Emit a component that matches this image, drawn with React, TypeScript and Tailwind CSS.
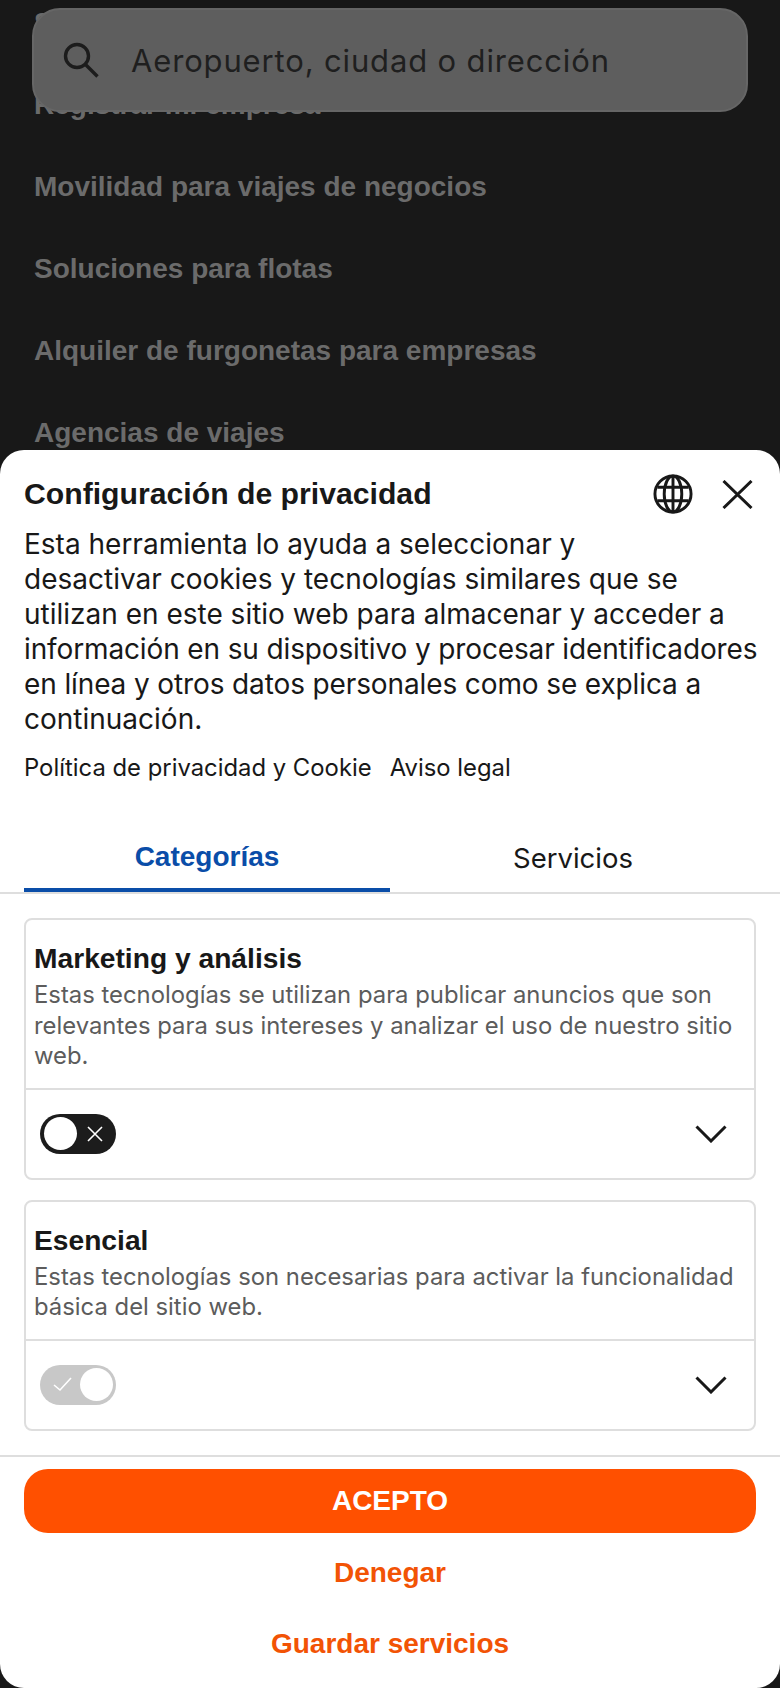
const sans = "font-['Liberation_Sans',Arial,sans-serif]";

const menuItems = [
  "Servicios",
  "Registrar mi empresa",
  "Movilidad para viajes de negocios",
  "Soluciones para flotas",
  "Alquiler de furgonetas para empresas",
  "Agencias de viajes",
];

function Chevron() {
  return (
    <svg width="32" height="18" viewBox="0 0 32 18" fill="none" stroke="#181818" strokeWidth="3">
      <path d="M1.5 1.5 16 16 30.5 1.5" />
    </svg>
  );
}

function ToggleOff() {
  return (
    <div className="flex h-[40px] w-[76px] items-center justify-between rounded-full bg-[#1c1c1c] pl-[4px] pr-[13px]">
      <div className="h-[33px] w-[33px] rounded-full bg-white" />
      <svg width="16" height="16" viewBox="0 0 16 16" fill="none" stroke="#fff" strokeWidth="1.6">
        <path d="M1 1l14 14M15 1 1 15" />
      </svg>
    </div>
  );
}

function ToggleOn() {
  return (
    <div className="flex h-[40px] w-[76px] items-center justify-between rounded-full bg-[#c8c8c8] pl-[13px] pr-[3px]">
      <svg width="19" height="15" viewBox="0 0 19 15" fill="none" stroke="#fff" strokeWidth="1.6">
        <path d="M1 8l6 5L18 1" />
      </svg>
      <div className="h-[33px] w-[33px] rounded-full bg-white" />
    </div>
  );
}

function Card(props: { title: string; text: string; toggle: React.ReactNode }) {
  return (
    <div className="rounded-[8px] border-2 border-[#dedede]">
      <div className="px-2 pt-[20px] pb-[16px]">
        <h3 className="text-[28.2px] leading-[36px] font-bold text-[#181818]">{props.title}</h3>
        <p className="mt-[4px] font-['Inter',sans-serif] text-[23.85px] leading-[30.5px] text-[#5c5c5c]">{props.text}</p>
      </div>
      <div className="flex h-[90px] items-center justify-between border-t-2 border-[#dedede] pr-[27px] pl-[14px]">
        {props.toggle}
        <Chevron />
      </div>
    </div>
  );
}

export default function App() {
  return (
    <div className={`relative h-[1688px] w-[780px] overflow-hidden bg-[#181818] ${sans}`}>
      <ul className="flex flex-col gap-[42px] pt-[3px] pl-[34px]">
        {menuItems.map((item) => (
          <li key={item} className="text-[28px] leading-[40px] font-bold text-[#6b6b6b]">
            {item}
          </li>
        ))}
      </ul>

      <div className="absolute top-2 left-8 flex h-[104px] w-[716px] items-center rounded-[28px] border-2 border-[#666] bg-[#5e5e5e] pl-[28px]">
        <svg width="38" height="38" viewBox="0 0 38 38" fill="none" stroke="#1c1c1c" strokeWidth="3.4">
          <circle cx="15" cy="15" r="11.5" />
          <path d="M23.5 23.5 35.5 35.5" />
        </svg>
        <span className="ml-[31px] pt-[3px] font-['Inter',sans-serif] text-[31px] tracking-[0.85px] text-[#1f1f1f]">
          Aeropuerto, ciudad o dirección
        </span>
      </div>

      <div className="absolute inset-x-0 bottom-0 flex h-[1238px] flex-col rounded-[24px] bg-white text-[#181818]">
        <div className="px-6 pt-[24px]">
          <div className="flex h-[40px] items-center justify-between">
            <h2 className="text-[30.2px] font-bold">Configuración de privacidad</h2>
            <div className="flex items-center gap-[29px] pr-[3px]">
              <svg width="40" height="40" viewBox="0 0 41 41" fill="none" stroke="#181818" strokeWidth="3">
                <circle cx="20.5" cy="20.5" r="18.5" />
                <ellipse cx="20.5" cy="20.5" rx="9" ry="18.5" />
                <path d="M20.5 2v37M4.5 13.5h32M4.5 27.5h32" />
              </svg>
              <svg width="31" height="29" viewBox="0 0 31 29" fill="none" stroke="#181818" strokeWidth="3">
                <path d="M1.5 1 29.5 28M29.5 1 1.5 28" />
              </svg>
            </div>
          </div>
          <p className="mt-[13px] whitespace-nowrap font-['Inter',sans-serif] text-[28px] leading-[35px]">
            Esta herramienta lo ayuda a seleccionar y
            <br />
            desactivar cookies y tecnologías similares que se
            <br />
            utilizan en este sitio web para almacenar y acceder a
            <br />
            <span className="tracking-[-0.13px]">información en su dispositivo y procesar identificadores</span>
            <br />
            <span className="tracking-[-0.12px]">en línea y otros datos personales como se explica a</span>
            <br />
            continuación.
          </p>
          <div className="mt-[16px] flex gap-[18px] font-['Inter',sans-serif] text-[23.85px] leading-[30px]">
            <span>Política de privacidad y Cookie</span>
            <span>Aviso legal</span>
          </div>
        </div>

        <div className="mt-[49px] flex h-[62px] border-b-2 border-[#dedede] px-6">
          <div className="flex flex-1 items-center justify-center border-b-4 border-[#0a4da8] pb-[7px] text-[28px] font-bold text-[#0a4da8]">
            Categorías
          </div>
          <div className="flex flex-1 items-center justify-center pb-[7px] font-['Inter',sans-serif] text-[27.5px]">
            Servicios
          </div>
        </div>

        <div className="flex flex-col gap-[20px] px-6 pt-[24px] pb-[24px]">
          <Card
            title="Marketing y análisis"
            text="Estas tecnologías se utilizan para publicar anuncios que son relevantes para sus intereses y analizar el uso de nuestro sitio web."
            toggle={<ToggleOff />}
          />
          <Card
            title="Esencial"
            text="Estas tecnologías son necesarias para activar la funcionalidad básica del sitio web."
            toggle={<ToggleOn />}
          />
        </div>

        <div className="flex flex-col border-t-2 border-[#dedede] px-6 pt-[12px] text-[28px] font-bold">
          <button className="h-[64px] rounded-[24px] bg-[#ff5000] text-white">ACEPTO</button>
          <button className="mt-[5px] h-[71px] text-[#f25305]">Denegar</button>
          <button className="h-[71px] text-[#f25305]">Guardar servicios</button>
        </div>
      </div>
    </div>
  );
}
